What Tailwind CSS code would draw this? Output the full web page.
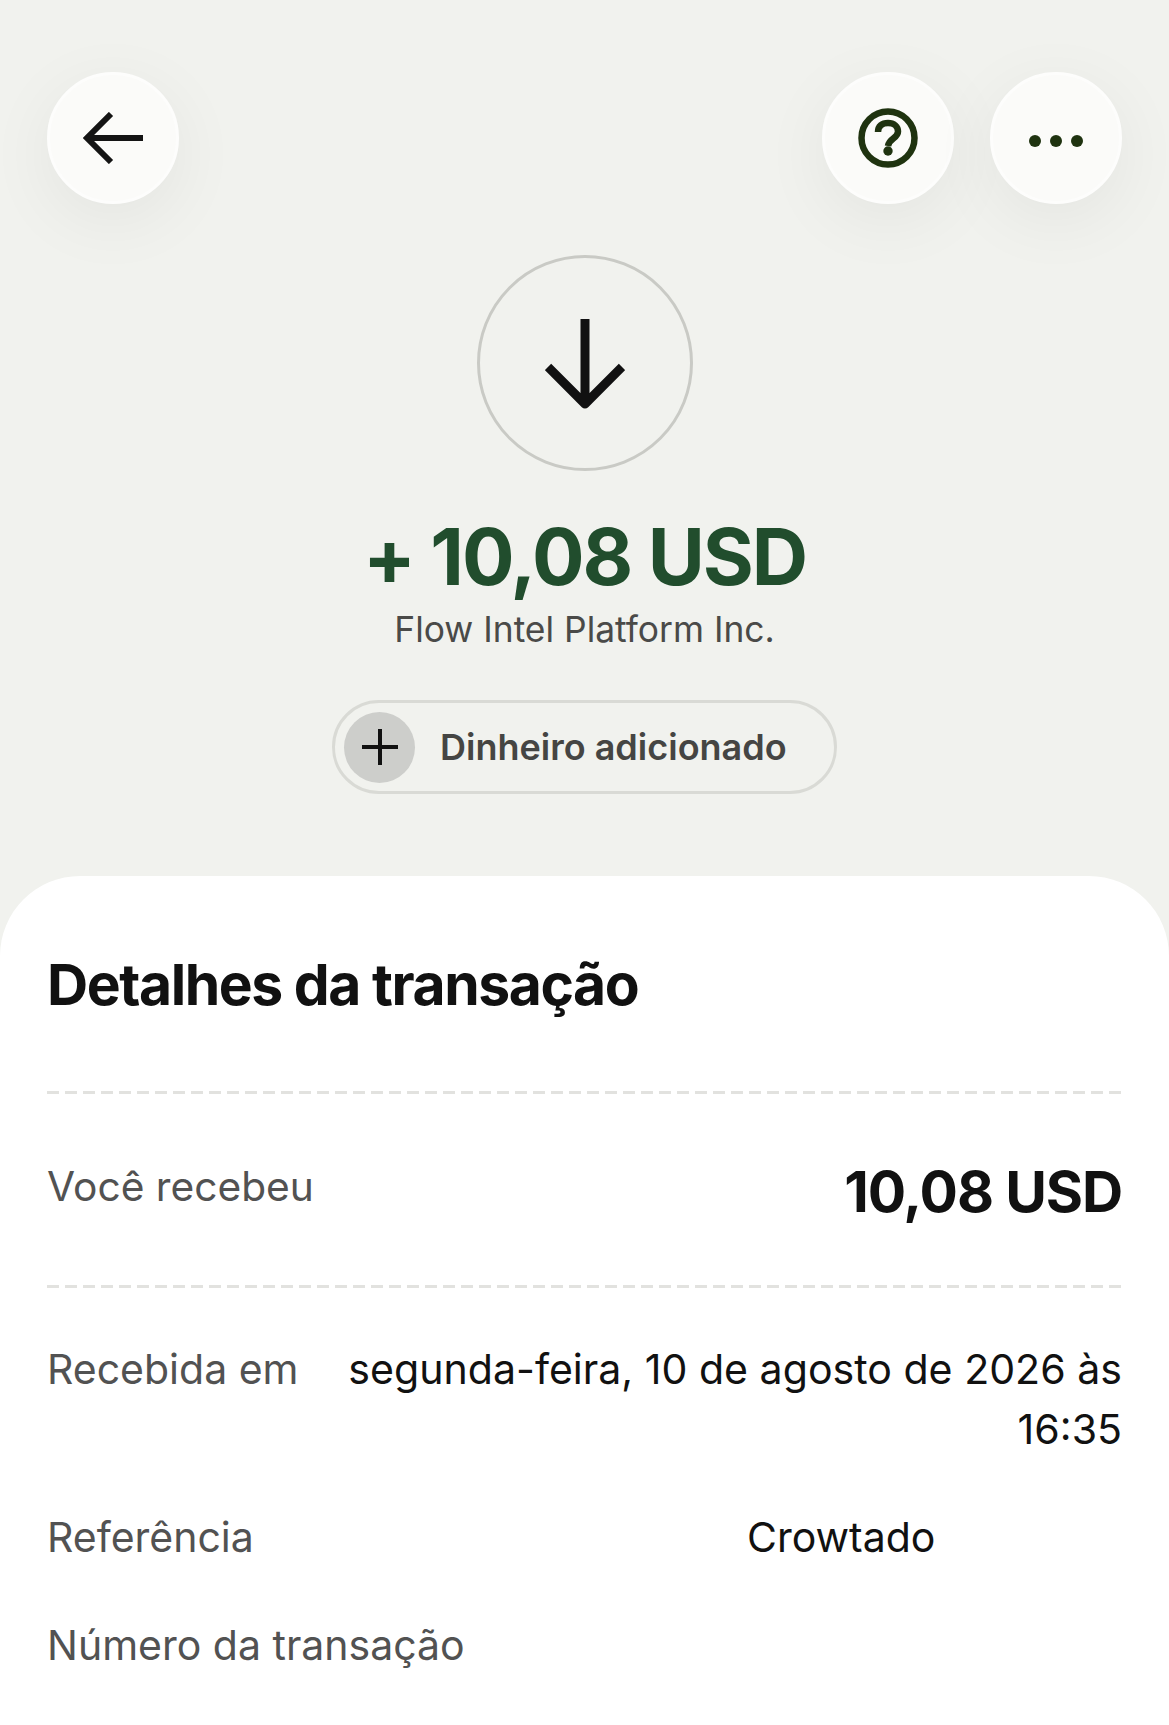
<!DOCTYPE html>
<html lang="pt-BR">
<head>
  <meta charset="UTF-8" />
  <meta name="viewport" content="width=device-width, initial-scale=1.0"/>
  <title>Detalhes da transação</title>
  <script src="https://cdn.jsdelivr.net/npm/@tailwindcss/browser@4"></script>
</head>
<body class="bg-[#f1f2ee] font-['Inter',sans-serif] text-[#111111] overflow-hidden">
  <div class="w-[1169px] h-[1725px] flex flex-col overflow-hidden">

    <!-- top buttons -->
    <div class="flex justify-between px-[47px] pt-[72px] shrink-0">
      <button class="w-[132px] h-[132px] rounded-full bg-[#fbfbf9] border-[3px] border-[#fdfdfc] shadow-[0_16px_70px_rgba(0,0,0,0.06)] flex items-center justify-center">
        <svg width="60" height="52" viewBox="0 0 60 52" fill="none" stroke="#141414" stroke-width="6"><path d="M60 26H3M28 2 4 26l24 24"/></svg>
      </button>
      <div class="flex gap-[36px]">
        <button class="w-[132px] h-[132px] rounded-full bg-[#fbfbf9] border-[3px] border-[#fdfdfc] shadow-[0_16px_70px_rgba(0,0,0,0.06)] flex items-center justify-center">
          <svg width="60" height="60" viewBox="0 0 60 60" fill="none" stroke="#1f3310" stroke-width="6.500"><circle cx="30" cy="30" r="26.500"/><path d="M20 24c0-6 4-9 10-9s10 3.500 10 8.500c0 7-9 6.500-10 14.500"/><circle cx="30" cy="43" r="4.700" fill="#1f3310" stroke="none"/></svg>
        </button>
        <button class="w-[132px] h-[132px] rounded-full bg-[#fbfbf9] border-[3px] border-[#fdfdfc] shadow-[0_16px_70px_rgba(0,0,0,0.06)] flex items-center justify-center pt-[6px]">
          <svg width="54" height="12" viewBox="0 0 54 12" fill="#1f3310"><circle cx="6" cy="6" r="6"/><circle cx="27" cy="6" r="6"/><circle cx="48" cy="6" r="6"/></svg>
        </button>
      </div>
    </div>

    <!-- summary -->
    <div class="flex flex-col items-center shrink-0">
      <div class="mt-[51px] w-[216px] h-[216px] rounded-full border-[3px] border-[#c9cac5] flex items-center justify-center">
        <svg class="mt-[3px]" width="80" height="92" viewBox="0 0 80 92" fill="none" stroke="#111111" stroke-width="9" stroke-linejoin="round"><path d="M40 0v85M3 48l37 37 37-37"/></svg>
      </div>
      <p class="mt-[40px] text-[78px] leading-[92px] font-[650] tracking-[-0.026em] text-[#214d2d]">+ 10,08 USD</p>
      <p class="mt-[5px] text-[35.400px] leading-[44px] text-[#4a4a48]">Flow Intel Platform Inc.</p>
      <div class="mt-[48px] w-[505px] h-[94px] rounded-full border-[3px] border-[#d9dad5] flex items-center pl-[9px] gap-[25px]">
        <span class="w-[71px] h-[71px] rounded-full bg-[#cdcecb] flex items-center justify-center">
          <svg width="36" height="36" viewBox="0 0 36 36" stroke="#111111" stroke-width="4"><path d="M18 0v36M0 18h36"/></svg>
        </span>
        <span class="text-[36px] font-semibold text-[#454543]">Dinheiro adicionado</span>
      </div>
    </div>

    <!-- details card -->
    <div class="mt-[82px] flex-1 bg-white rounded-t-[80px] px-[47px]">
      <h2 class="pt-[74px] text-[57px] leading-[70px] font-[650] tracking-[-0.025em]">Detalhes da transação</h2>
      <div class="mt-[71px] h-[3px] bg-[repeating-linear-gradient(90deg,#e2e2df_0,#e2e2df_12px,transparent_12px,transparent_18px)]"></div>
      <div class="flex justify-between items-start pt-[63px] pb-[58px]">
        <span class="mt-[2px] text-[40.700px] leading-[56px] text-[#525252]">Você recebeu</span>
        <span class="text-[57px] leading-[70px] font-[650] tracking-[-0.02em]">10,08 USD</span>
      </div>
      <div class="h-[3px] bg-[repeating-linear-gradient(90deg,#e2e2df_0,#e2e2df_12px,transparent_12px,transparent_18px)]"></div>
      <div class="flex justify-between items-start gap-[48px] pt-[51px]">
        <span class="text-[41px] leading-[60px] text-[#525252] whitespace-nowrap">Recebida em</span>
        <span class="text-[41.100px] leading-[60px] text-right">segunda-feira, 10 de agosto de 2026 às 16:35</span>
      </div>
      <div class="grid grid-cols-[700px_1fr] pt-[48px]">
        <span class="text-[41px] leading-[60px] text-[#525252]">Referência</span>
        <span class="text-[41px] leading-[60px]">Crowtado</span>
      </div>
      <div class="pt-[48px]">
        <span class="text-[41px] leading-[60px] text-[#525252]">Número da transação</span>
      </div>
    </div>
  </div>
</body>
</html>
